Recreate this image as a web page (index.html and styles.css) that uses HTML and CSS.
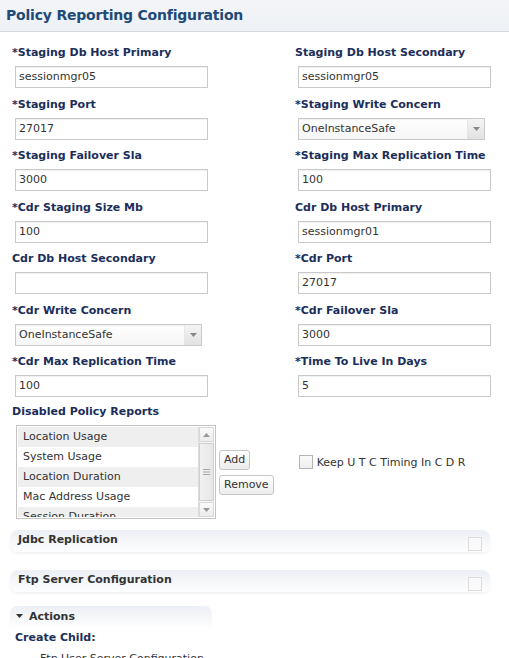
FILE: index.html
```html
<!DOCTYPE html>
<html>
<head>
<meta charset="utf-8">
<link rel="stylesheet" href="styles.css">
</head>
<body>
<div class="header"><h1>Policy Reporting Configuration</h1></div>
<div class="form">
  <div class="grid">
    <div class="field"><label>*Staging Db Host Primary</label><div class="input">sessionmgr05</div></div>
    <div class="field"><label>Staging Db Host Secondary</label><div class="input">sessionmgr05</div></div>
    <div class="field"><label>*Staging Port</label><div class="input">27017</div></div>
    <div class="field"><label>*Staging Write Concern</label><div class="select"><span>OneInstanceSafe</span><span class="arrow"><svg width="7" height="4" viewBox="0 0 7 4"><path d="M0 0h7L3.5 4z" fill="#888"/></svg></span></div></div>
    <div class="field"><label>*Staging Failover Sla</label><div class="input">3000</div></div>
    <div class="field"><label>*Staging Max Replication Time</label><div class="input">100</div></div>
    <div class="field"><label>*Cdr Staging Size Mb</label><div class="input">100</div></div>
    <div class="field"><label>Cdr Db Host Primary</label><div class="input">sessionmgr01</div></div>
    <div class="field"><label>Cdr Db Host Secondary</label><div class="input"></div></div>
    <div class="field"><label>*Cdr Port</label><div class="input">27017</div></div>
    <div class="field"><label>*Cdr Write Concern</label><div class="select"><span>OneInstanceSafe</span><span class="arrow"><svg width="7" height="4" viewBox="0 0 7 4"><path d="M0 0h7L3.5 4z" fill="#888"/></svg></span></div></div>
    <div class="field"><label>*Cdr Failover Sla</label><div class="input">3000</div></div>
    <div class="field"><label>*Cdr Max Replication Time</label><div class="input">100</div></div>
    <div class="field"><label>*Time To Live In Days</label><div class="input">5</div></div>
  </div>

  <div class="reports">
    <label>Disabled Policy Reports</label>
    <div class="reports-row">
      <div class="listbox">
        <div class="items">
          <div class="item alt">Location Usage</div>
          <div class="item">System Usage</div>
          <div class="item alt">Location Duration</div>
          <div class="item">Mac Address Usage</div>
          <div class="item alt">Session Duration</div>
        </div>
        <div class="scrollbar">
          <div class="sb-btn"><svg width="7" height="4" viewBox="0 0 7 4"><path d="M0 4h7L3.5 0z" fill="#999"/></svg></div>
          <div class="sb-thumb"><svg width="7" height="6" viewBox="0 0 7 6"><path d="M0 .5h7M0 3h7M0 5.5h7" stroke="#aaa" stroke-width="1"/></svg></div>
          <div class="sb-btn"><svg width="7" height="4" viewBox="0 0 7 4"><path d="M0 0h7L3.5 4z" fill="#999"/></svg></div>
        </div>
      </div>
      <div class="buttons">
        <button class="btn">Add</button>
        <button class="btn">Remove</button>
      </div>
      <div class="check-row"><span class="checkbox"></span><span class="check-label">Keep U T C Timing In C D R</span></div>
    </div>
  </div>

  <div class="panel"><span>Jdbc Replication</span><span class="checkbox"></span></div>
  <div class="panel"><span>Ftp Server Configuration</span><span class="checkbox"></span></div>

  <div class="actions"><svg width="7" height="4" viewBox="0 0 7 4"><path d="M0 0h7L3.5 4z" fill="#333"/></svg><span>Actions</span></div>
  <div class="create">Create Child:</div>
  <ul class="children"><li>Ftp User Server Configuration</li></ul>
</div>
</body>
</html>
```
FILE: styles.css
```css
* { box-sizing: border-box; }
html, body { margin: 0; padding: 0; background: #fff; }
body { font-family: "DejaVu Sans", Verdana, sans-serif; font-size: 11px; color: #333; width: 509px; height: 658px; overflow: hidden; }

.header {
  height: 32px;
  background: linear-gradient(#f3f5f8, #eef1f5);
  border-bottom: 1px solid #d3d7de;
  padding: 6px 0 0 6px;
}
.header h1 { margin: 0; font-size: 14px; font-weight: bold; color: #1e4a7a; line-height: 18px; letter-spacing: -0.2px; }

.form { padding: 14px 0 0 12px; }
.grid { display: grid; grid-template-columns: 283px 1fr; row-gap: 9.5px; }
.field label, .reports label {
  display: block; font-weight: bold; color: #1b2e5a; line-height: 14px; height: 14px; font-size: 11px;
}
.input, .select {
  margin: 6px 0 0 3px;
  height: 22px;
  width: 193px;
  border: 1px solid #c9c9c9;
  box-shadow: inset 0 1px 1px rgba(0,0,0,0.06);
  padding: 0 0 0 3px;
  line-height: 20px;
  color: #333;
  font-size: 11px;
}
.select {
  width: 187px;
  display: flex; justify-content: space-between; align-items: stretch;
  padding-right: 0;
  background: linear-gradient(#fff, #f6f6f6);
}
.select .arrow {
  width: 17px; display: flex; align-items: center; justify-content: center;
  background: linear-gradient(#f4f4f4, #e2e2e2);
  border-left: 1px solid #e6e6e6;
}

.reports { margin-top: 8px; }
.reports-row { display: flex; align-items: flex-start; margin-top: 6px; }
.listbox {
  margin-left: 4px; width: 200px; height: 94px;
  border: 1px solid #c4c4c4; display: flex; padding: 1px; background: #fff;
}
.items { flex: 1; overflow: hidden; }
.item { height: 20px; line-height: 20px; padding-left: 5px; color: #333; }
.item.alt { background: #efefef; }
.scrollbar { width: 16px; display: flex; flex-direction: column; border-left: 1px solid #ddd; background: #f7f7f7; }
.sb-btn { height: 15px; display: flex; align-items: center; justify-content: center; background: linear-gradient(#fafafa, #ececec); border: 1px solid #d8d8d8; }
.sb-thumb { flex: 1; display: flex; align-items: center; justify-content: center; background: linear-gradient(90deg, #f2f2f2, #e6e6e6); border: 1px solid #cfcfcf; margin: 1px 0; }

.buttons { display: flex; flex-direction: column; align-items: flex-start; gap: 5px; margin: 25px 0 0 3px; }
.btn {
  font-family: inherit; font-size: 11px; color: #333;
  height: 20px; padding: 0 4px; line-height: 18px;
  border: 1px solid #c6c6c6; border-radius: 3px;
  background: linear-gradient(#fff, #ececec);
}
.check-row { display: flex; align-items: center; margin: 30px 0 0 25px; }
.checkbox { display: inline-block; width: 14px; height: 14px; border: 1px solid #b5b5b5; background: linear-gradient(#fafafa, #eee); }
.check-label { margin-left: 4px; color: #333; }

.panel {
  margin: 11px 19px 0 -2px;
  height: 22px;
  border-radius: 8px;
  background: linear-gradient(#eceff4, #fafbfc 80%, #fff);
  box-shadow: 0 2px 3px rgba(0,0,0,0.05);
  display: flex; justify-content: space-between; align-items: flex-start;
  padding: 4px 8px 0 8px;
  font-weight: bold; color: #333;
}
.panel + .panel { margin-top: 18px; }
.panel .checkbox { margin-top: 3px; border-color: #dcdcdc; background: #fafafa; }
.panel span:first-child { line-height: 12px; }

.actions {
  margin: 14px 0 0 -2px; width: 202px; height: 22px;
  border-radius: 7px 7px 0 0;
  background: linear-gradient(#eceff4, #fafbfc 80%, #fff);
  display: flex; align-items: center; gap: 6px; padding: 0 0 2px 6px;
  font-weight: bold; color: #333;
}
.create { margin: 3px 0 0 3px; font-weight: bold; color: #1b2e5a; line-height: 14px; }
.children { margin: 7px 0 0 0; padding-left: 28px; color: #333; line-height: 14px; }
```
